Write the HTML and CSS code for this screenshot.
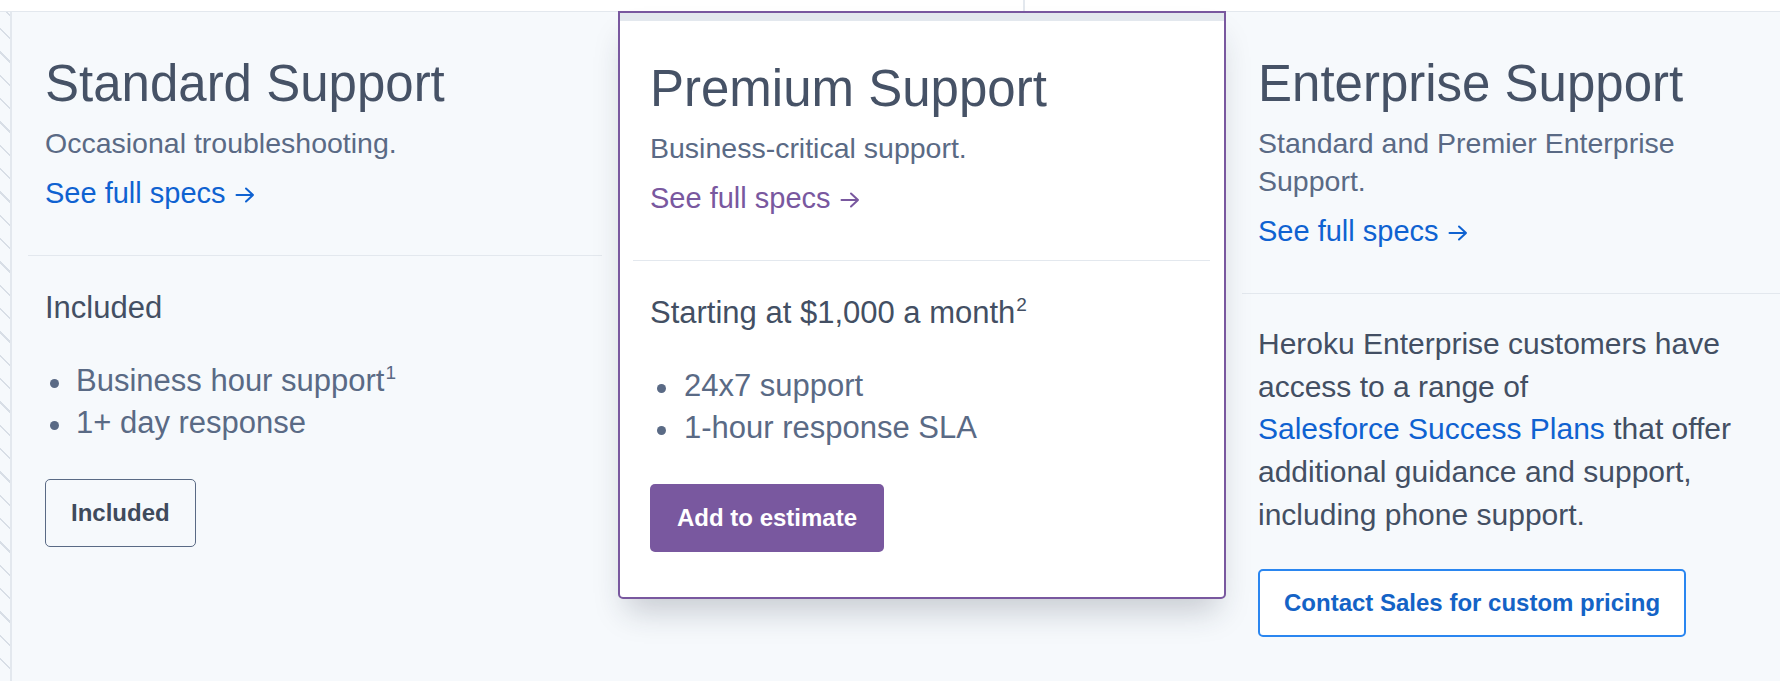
FILE: index.html
```html
<!DOCTYPE html>
<html lang="en">
<head>
<meta charset="utf-8">
<title>Support plans</title>
<link rel="stylesheet" href="styles.css">
</head>
<body>
<div class="topbar"><div class="topbar-seg"></div></div>
<div class="row">
  <div class="hatch"></div>
  <section class="plan plan-standard">
    <div class="plan-head">
      <h3 class="plan-title">Standard Support</h3>
      <p class="plan-sub">Occasional troubleshooting.</p>
      <a class="plan-link" href="#">See full specs <svg class="arrow" viewBox="0 0 20 18"><path d="M1.5 9H18M11 2.5L18 9L11 15.5" fill="none" stroke="currentColor" stroke-width="2" stroke-linecap="round" stroke-linejoin="round"/></svg></a>
    </div>
    <hr class="plan-rule">
    <div class="plan-body">
      <p class="plan-price">Included</p>
      <ul class="plan-list">
        <li>Business hour support<sup>1</sup></li>
        <li>1+ day response</li>
      </ul>
      <span class="btn btn-outline">Included</span>
    </div>
  </section>
  <section class="plan plan-premium">
    <div class="plan-band"></div>
    <div class="plan-head">
      <h3 class="plan-title">Premium Support</h3>
      <p class="plan-sub">Business-critical support.</p>
      <a class="plan-link link-purple" href="#">See full specs <svg class="arrow" viewBox="0 0 20 18"><path d="M1.5 9H18M11 2.5L18 9L11 15.5" fill="none" stroke="currentColor" stroke-width="2" stroke-linecap="round" stroke-linejoin="round"/></svg></a>
    </div>
    <hr class="plan-rule">
    <div class="plan-body">
      <p class="plan-price">Starting at $1,000 a month<sup>2</sup></p>
      <ul class="plan-list">
        <li>24x7 support</li>
        <li>1-hour response SLA</li>
      </ul>
      <a class="btn btn-purple" href="#">Add to estimate</a>
    </div>
  </section>
  <section class="plan plan-enterprise">
    <div class="plan-head">
      <h3 class="plan-title">Enterprise Support</h3>
      <p class="plan-sub">Standard and Premier Enterprise Support.</p>
      <a class="plan-link" href="#">See full specs <svg class="arrow" viewBox="0 0 20 18"><path d="M1.5 9H18M11 2.5L18 9L11 15.5" fill="none" stroke="currentColor" stroke-width="2" stroke-linecap="round" stroke-linejoin="round"/></svg></a>
    </div>
    <hr class="plan-rule">
    <div class="plan-body">
      <p class="plan-text"><span>Heroku Enterprise customers have access to a range of</span> <a class="inline-link" href="#">Salesforce Success Plans</a> <span>that offer additional guidance and support, including phone support.</span></p>
      <a class="btn btn-blue" href="#">Contact Sales for custom pricing</a>
    </div>
  </section>
</div>
</body>
</html>
```

FILE: styles.css
```css
* { box-sizing: border-box; }

html, body {
  margin: 0;
  padding: 0;
}

body {
  background: #f6f9fc;
  font-family: "Liberation Sans", Arial, sans-serif;
  color: #434f63;
  width: 1780px;
  height: 681px;
  overflow: hidden;
}

.topbar {
  height: 12px;
  background: #ffffff;
  border-bottom: 1px solid #e3e8ee;
}

.topbar-seg {
  width: 1025px;
  height: 11px;
  border-right: 2px solid #e3e8ee;
}

.row {
  display: flex;
  align-items: flex-start;
  height: 669px;
}

.hatch {
  flex: 0 0 12px;
  align-self: stretch;
  border-right: 2px solid #e3e8ee;
  background: repeating-linear-gradient(45deg, #f6f9fc 0, #f6f9fc 15px, #d8dee6 15px, #d8dee6 16.5px);
}

.plan {
  display: flex;
  flex-direction: column;
}

.plan-standard {
  flex: 0 0 606px;
  padding-top: 41px;
}

.plan-premium {
  flex: 0 0 608px;
  margin-top: -1px;
  background: #ffffff;
  border: 2px solid #79589f;
  border-radius: 0 0 5px 5px;
  box-shadow: 0 20px 30px -8px rgba(30, 40, 60, 0.22);
  padding-bottom: 45px;
  position: relative;
  z-index: 1;
}

.plan-band {
  height: 8px;
  background: #e3e8ee;
  margin-bottom: 37px;
}

.plan-enterprise {
  flex: 1 1 auto;
  padding-top: 41px;
}

.plan-head, .plan-body { padding-left: 33px; }
.plan-premium .plan-head, .plan-premium .plan-body { padding-left: 30px; }
.plan-enterprise .plan-head, .plan-enterprise .plan-body { padding-left: 32px; padding-right: 20px; }

.plan-head { padding-bottom: 43px; }

.plan-title {
  margin: 0 0 10px;
  font-size: 51px;
  line-height: 61px;
  font-weight: 400;
  color: #465266;
  white-space: nowrap;
}

.plan-sub {
  margin: 0 0 12px;
  font-size: 28.5px;
  line-height: 38px;
  color: #5a6a85;
}

.plan-enterprise .plan-sub { max-width: 500px; }

.plan-link {
  display: block;
  font-size: 29px;
  line-height: 38px;
  color: #0f62d1;
  text-decoration: none;
  white-space: nowrap;
}

.link-purple { color: #79589f; }

.arrow {
  width: 20px;
  height: 18px;
  margin-left: 1px;
  vertical-align: -1px;
}

.plan-rule {
  margin: 0 16px;
  border: 0;
  border-top: 1px solid #e3e8ee;
  height: 0;
}

.plan-premium .plan-rule { margin: 0 14px 0 13px; }
.plan-enterprise .plan-rule { margin: 0 0 0 16px; }

.plan-body { padding-top: 31px; }
.plan-enterprise .plan-body { padding-top: 29px; }

.plan-price {
  margin: 0 0 31px;
  font-size: 31px;
  line-height: 42px;
  color: #434f63;
  white-space: nowrap;
}

.plan-list {
  list-style: none;
  margin: 0 0 35px;
  padding: 0;
}

.plan-list li {
  position: relative;
  padding-left: 31px;
  font-size: 31px;
  line-height: 42px;
  color: #5a6a85;
}

.plan-premium .plan-list li { padding-left: 34px; }

.plan-list li::before {
  content: "";
  position: absolute;
  left: 5px;
  top: 19px;
  width: 9px;
  height: 9px;
  border-radius: 50%;
  background: #5a6a85;
}

.plan-premium .plan-list li::before { left: 7px; }

sup {
  font-size: 19px;
  line-height: 0;
  vertical-align: 12px;
  margin-left: 1px;
}

.plan-text {
  margin: 0 0 32px;
  max-width: 500px;
  font-size: 30px;
  line-height: 42.7px;
  color: #434f63;
}

.inline-link {
  color: #0f62d1;
  text-decoration: none;
  white-space: nowrap;
}

.btn {
  display: inline-block;
  align-self: flex-start;
  font-size: 24px;
  line-height: 28px;
  font-weight: 700;
  text-decoration: none;
  border-radius: 5px;
  white-space: nowrap;
}

.btn-outline {
  border: 1px solid #5a6a85;
  color: #3f4a5c;
  padding: 19px 25px;
}

.btn-purple {
  background: #79589f;
  color: #ffffff;
  padding: 20px 27px;
}

.btn-blue {
  background: #ffffff;
  border: 2px solid #2a86f0;
  color: #1463c6;
  padding: 18px 24px;
}
```
